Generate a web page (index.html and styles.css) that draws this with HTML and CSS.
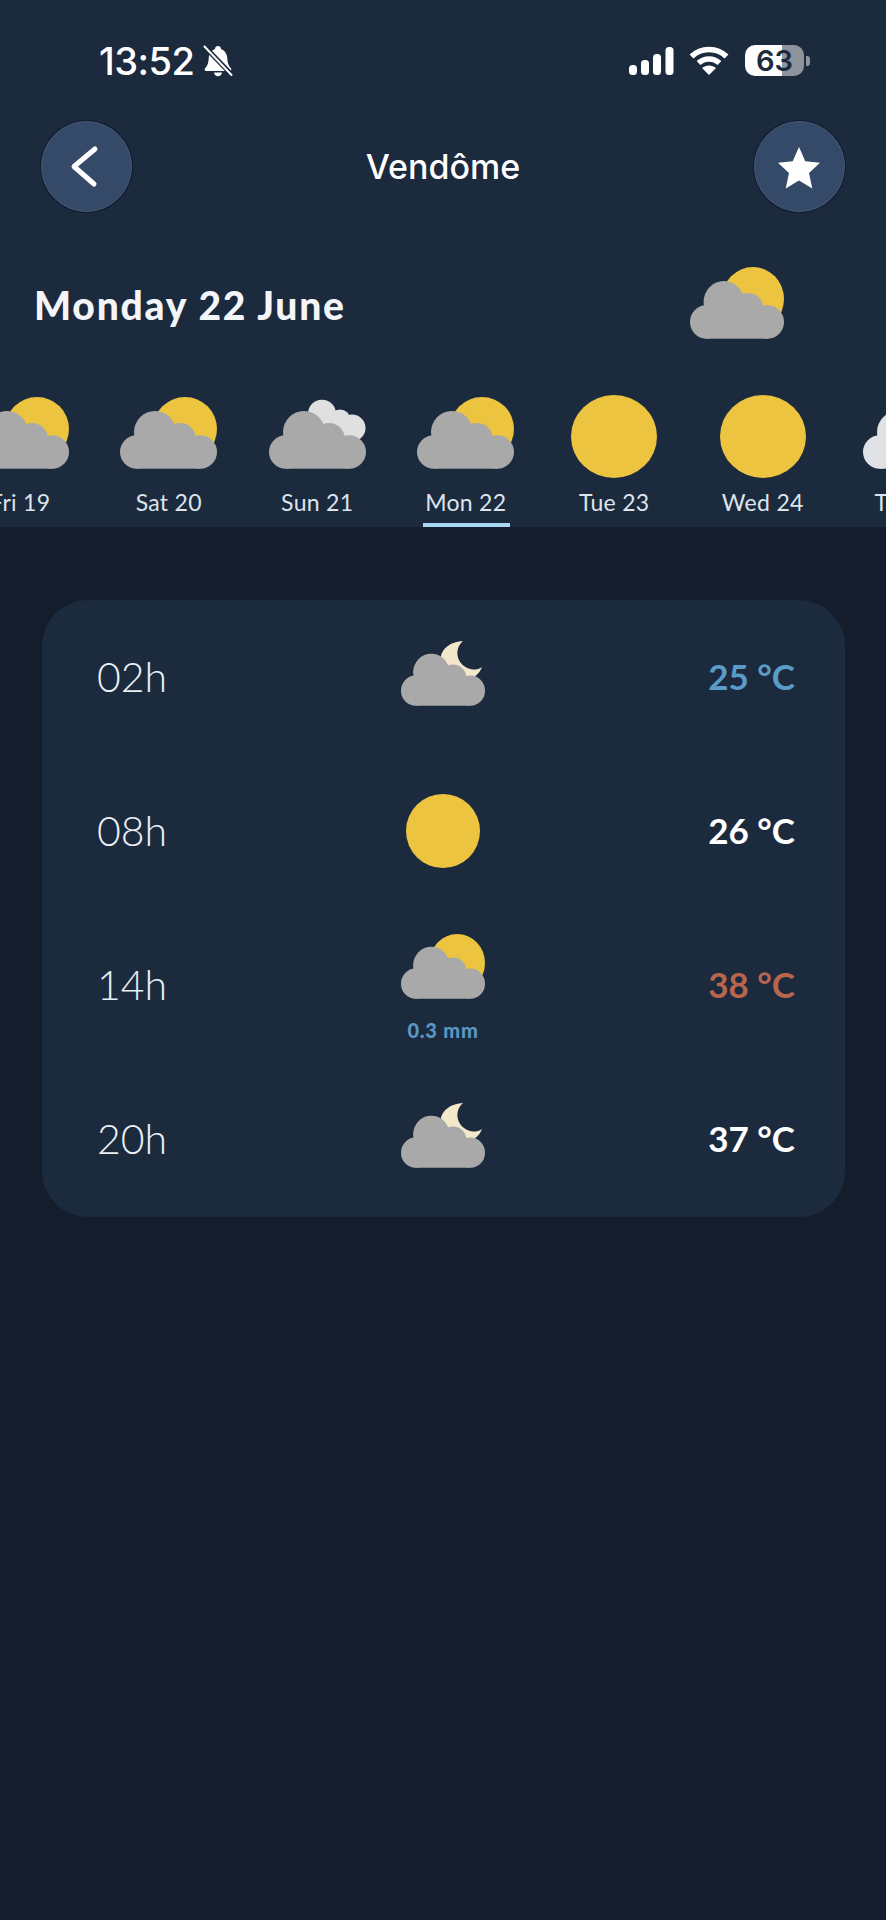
FILE: index.html
```html
<!DOCTYPE html>
<html lang="en">
<head>
<meta charset="utf-8">
<title>Vendôme</title>
<link rel="stylesheet" href="styles.css">
</head>
<body>
<svg class="defs" width="0" height="0" aria-hidden="true">
  <defs>
    <g id="cloud-shape">
      <circle cx="16.7" cy="55" r="16.7"/><circle cx="80.3" cy="55" r="16.7"/>
      <circle cx="35" cy="35" r="21"/><circle cx="60" cy="41.7" r="15.7"/>
      <rect x="16.7" y="44" width="63.6" height="27.7"/>
    </g>
    <symbol id="sun-cloud" viewBox="0 0 97 72" preserveAspectRatio="none">
      <circle cx="65" cy="32" r="32" fill="#ecc440"/>
      <use href="#cloud-shape" fill="#a9a9a9"/>
    </symbol>
    <symbol id="grey-cloud" viewBox="0 0 97 72" preserveAspectRatio="none">
      <g fill="#e0e0e0"><circle cx="53" cy="16.7" r="14"/><circle cx="71" cy="23" r="10.5"/><circle cx="83" cy="31" r="13.5"/><rect x="50" y="20" width="30" height="20"/></g>
      <use href="#cloud-shape" fill="#a9a9a9"/>
    </symbol>
    <symbol id="light-cloud" viewBox="0 0 97 72" preserveAspectRatio="none">
      <use href="#cloud-shape" fill="#e0e1e4"/>
    </symbol>
    <symbol id="moon-cloud" viewBox="0 0 97 72" preserveAspectRatio="none">
      <path transform="scale(1.155 1.107)" fill="#f3e7cc" d="M62 0C48 1 39 9 39.500 20C40 33 58 39 70 37C76 35 79 31 81 26C75 30 68 29 63 25C56 20 53 8 62 0Z"/>
      <use href="#cloud-shape" fill="#a9a9a9"/>
    </symbol>
  </defs>
</svg>

<header class="top">
  <div class="status">
    <div class="status-left">
      <span class="clock">13:52</span>
      <svg class="bell" viewBox="0 0 30 32">
        <path fill="#fff" d="M15 1c2 0 3 1.400 3 3 4 1.500 6 5 6.300 9.500.3 4.500 1 7 3.700 10 .8 1 .2 2.500-1.200 2.500H3.200C1.800 26 1.200 24.500 2 23.500c2.700-3 3.400-5.500 3.700-10C6 9 8 5.500 12 4c0-1.600 1-3 3-3zM11 27.500h8c-.3 2.300-2 3.800-4 3.800s-3.700-1.500-4-3.800z"/>
        <path stroke="#1c2a3e" stroke-width="5" d="M0 0l30 31"/>
        <path stroke="#fff" stroke-width="2" stroke-linecap="round" d="M1.500 1.500l27 28.500"/>
      </svg>
    </div>
    <div class="status-right">
      <svg class="signal" viewBox="0 0 45 28" fill="#fff">
        <rect x="0" y="18" width="8" height="10" rx="3.500"/><rect x="12" y="13" width="8" height="15" rx="3.500"/><rect x="24" y="7" width="8" height="21" rx="3.500"/><rect x="36.500" y="0" width="8" height="28" rx="3.500"/>
      </svg>
      <svg class="wifi" viewBox="0 0 40 29" fill="none" stroke="#fff" stroke-width="5.500">
        <path d="M2.500 10.500C12 1 28 1 37.500 10.500"/><path d="M9.500 17c6-5.500 15-5.500 21 0"/>
        <path fill="#fff" stroke="none" d="M20 29l-7-7c4-3.500 10-3.500 14 0z"/>
      </svg>
      <div class="battery"><span class="battery-level">63</span></div>
      <span class="battery-cap"></span>
    </div>
  </div>

  <nav class="nav">
    <button class="round-btn" type="button" aria-label="Back">
      <svg class="btn-icon" viewBox="0 0 44 44" fill="none" stroke="#fff" stroke-width="5" stroke-linecap="round" stroke-linejoin="round"><path d="M30 4L9 21.500 29 39"/></svg>
    </button>
    <h1 class="city">Vendôme</h1>
    <button class="round-btn" type="button" aria-label="Favourite">
      <svg class="btn-icon" viewBox="0 0 44 44" fill="#fff"><path d="M22 2l6.300 14.300 14.700 1.400-11 10.300 3.300 15.500L22 35.500 8.700 43.500 12 28 1 17.700l14.700-1.400z"/></svg>
    </button>
  </nav>

  <div class="date-row">
    <h2 class="date">Monday 22 June</h2>
    <svg class="hero-icon"><use href="#sun-cloud"/></svg>
  </div>

  <div class="days">
    <div class="day"><div class="day-icon"><svg class="cloud-icon"><use href="#sun-cloud"/></svg></div><span class="day-label">Fri 19</span></div>
    <div class="day"><div class="day-icon"><svg class="cloud-icon"><use href="#sun-cloud"/></svg></div><span class="day-label">Sat 20</span></div>
    <div class="day"><div class="day-icon"><svg class="cloud-icon"><use href="#grey-cloud"/></svg></div><span class="day-label">Sun 21</span></div>
    <div class="day day-active"><div class="day-icon"><svg class="cloud-icon"><use href="#sun-cloud"/></svg></div><span class="day-label">Mon 22</span></div>
    <div class="day"><div class="day-icon"><span class="sun-disc"></span></div><span class="day-label">Tue 23</span></div>
    <div class="day"><div class="day-icon"><span class="sun-disc"></span></div><span class="day-label">Wed 24</span></div>
    <div class="day"><div class="day-icon"><svg class="cloud-icon"><use href="#light-cloud"/></svg></div><span class="day-label">Thu 25</span></div>
  </div>
</header>

<main class="content">
  <section class="card">
    <div class="row">
      <span class="hour">02h</span>
      <div class="cond"><svg class="row-icon"><use href="#moon-cloud"/></svg></div>
      <span class="temp temp-cold">25 °C</span>
    </div>
    <div class="row">
      <span class="hour">08h</span>
      <div class="cond"><span class="row-sun"></span></div>
      <span class="temp">26 °C</span>
    </div>
    <div class="row">
      <span class="hour">14h</span>
      <div class="cond cond-rain"><svg class="row-icon"><use href="#sun-cloud"/></svg><span class="rain">0.3 mm</span></div>
      <span class="temp temp-hot">38 °C</span>
    </div>
    <div class="row">
      <span class="hour">20h</span>
      <div class="cond"><svg class="row-icon"><use href="#moon-cloud"/></svg></div>
      <span class="temp">37 °C</span>
    </div>
  </section>
</main>
</body>
</html>
```

FILE: styles.css
```css
* { box-sizing: border-box; }
html, body { margin: 0; padding: 0; }
body {
  width: 886px;
  height: 1920px;
  overflow: hidden;
  background: #141d2b;
  color: #fff;
  font-family: "Lato", "Open Sans", sans-serif;
}
.defs { display: block; width: 0; height: 0; }

.top { background: #1c2a3e; height: 527px; overflow: hidden; }

.status {
  height: 121px;
  padding: 0 76px 0 99px;
  display: flex;
  align-items: center;
  justify-content: space-between;
}
.status-left { display: flex; align-items: center; gap: 8px; }
.clock { font: 500 38px "Inter", sans-serif; letter-spacing: -0.5px; }
.bell { width: 30px; height: 32px; }
.status-right { display: flex; align-items: center; }
.signal { width: 45px; height: 28px; }
.wifi { width: 40px; height: 29px; margin-left: 15px; }
.battery {
  width: 59px;
  height: 31px;
  margin-left: 16px;
  border-radius: 10px;
  background: linear-gradient(90deg, #fff 0 37px, #8f949c 37px);
  display: flex;
  align-items: center;
  justify-content: center;
}
.battery-level { font: 600 29px "Inter", sans-serif; color: #1c2a3e; }
.battery-cap {
  width: 4px;
  height: 10px;
  margin-left: 2px;
  border-radius: 0 3px 3px 0;
  background: #8f949c;
}

.nav {
  height: 91px;
  padding: 0 41px;
  display: flex;
  align-items: center;
  justify-content: space-between;
}
.round-btn {
  width: 91px;
  height: 91px;
  padding: 0;
  border-radius: 50%;
  border: 1px solid #45597a;
  background: #344a68;
  box-shadow: 0 0 0 1px #121b2b;
  display: flex;
  align-items: center;
  justify-content: center;
}
.btn-icon { width: 44px; height: 44px; }
.city { margin: 0; font: 500 34px "Inter", sans-serif; }

.date-row {
  margin-top: 55px;
  height: 72px;
  padding: 0 102px 0 34px;
  display: flex;
  align-items: center;
  justify-content: space-between;
}
.date { margin: 4px 0 0; font-size: 39px; font-weight: 900; letter-spacing: 1.8px; color: #f3f5f8; }
.hero-icon { width: 94px; height: 72px; display: block; }

.days { display: flex; margin: 55px 0 0 -54px; }
.day {
  flex: 0 0 148.500px;
  height: 133px;
  position: relative;
  display: flex;
  flex-direction: column;
  align-items: center;
}
.day-icon {
  height: 84px;
  display: flex;
  align-items: center;
  justify-content: center;
}
.cloud-icon { width: 97px; height: 72px; display: block; margin-top: -6px; }
.sun-disc {
  display: block;
  width: 86px;
  height: 83px;
  border-radius: 50%;
  background: #ecc440;
}
.day-label { margin-top: 11px; font-size: 23px; line-height: 26px; letter-spacing: 0.3px; color: #dde4ec; white-space: nowrap; }
.day-active::after {
  content: "";
  position: absolute;
  left: 31px;
  width: 87px;
  bottom: 0;
  height: 4px;
  background: #a8d8f5;
}

.content { padding: 73px 41px 0 42px; }
.card { background: #1c2a3e; border-radius: 46px; padding-bottom: 1px; }
.row {
  height: 154px;
  padding: 0 50px 0 55px;
  display: grid;
  grid-template-columns: 286px 120px 1fr;
  align-items: center;
}
.hour { margin-top: -2px; font-size: 41px; font-weight: 300; color: #eaf0f5; }
.cond { display: flex; flex-direction: column; align-items: center; }
.cond-rain { margin-top: 6px; }
.row-icon { width: 84px; height: 65px; display: block; margin-bottom: 8px; }
.row-icon + .rain { margin-top: 11px; }
.row-sun { display: block; width: 74px; height: 74px; border-radius: 50%; background: #ecc440; }
.rain { font-size: 20px; line-height: 24px; font-weight: 900; letter-spacing: 0.8px; color: #5b97c5; }
.temp { justify-self: end; margin-top: -2px; font-size: 35px; font-weight: 700; }
.temp-cold { color: #5b9bc9; }
.temp-hot { color: #b9644c; }
```
